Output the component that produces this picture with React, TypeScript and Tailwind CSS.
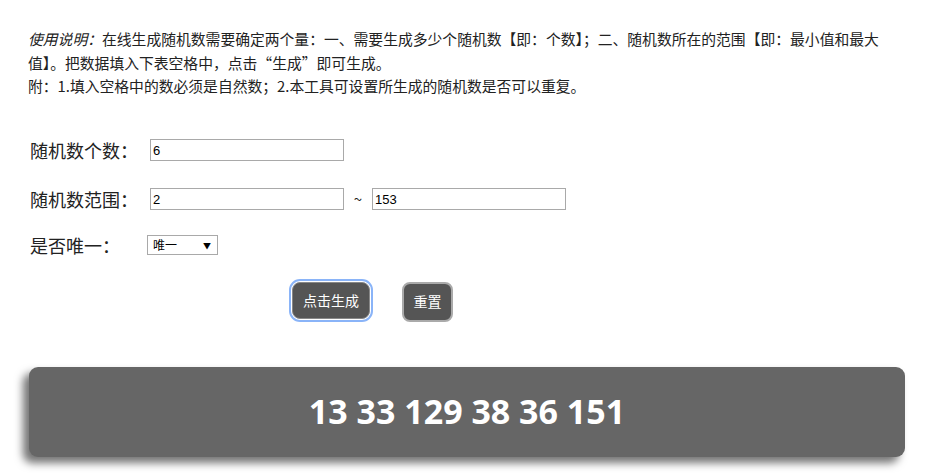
import React from "react";

const cjk = "font-['Noto_Sans_CJK_SC','Liberation_Sans',sans-serif]";

function Field({ value, className = "" }: { value: string; className?: string }) {
    return (
        <input
            readOnly
            value={value}
            className={`h-[22px] w-[194px] border border-[#a9a9a9] bg-white px-[2px] text-[13px] text-black outline-none font-['Liberation_Sans',sans-serif] ${className}`}
        />
    );
}

export default function App() {
    const result = [13, 33, 129, 38, 36, 151];

    return (
        <div className={`w-[928px] h-[475px] overflow-hidden bg-white text-[#333] ${cjk}`}>
            <div className="pl-[28px] pt-[27px] w-[900px] text-[14.8px] leading-[23.5px] text-[#222]">
                <p className="whitespace-nowrap">
                    <i>使用说明：</i>在线生成随机数需要确定两个量：一、需要生成多少个随机数【即：个数】；二、随机数所在的范围【即：最小值和最大
                    <br />
                    值】。把数据填入下表空格中，点击“生成”即可生成。
                </p>
                <p>附：1.填入空格中的数必须是自然数；2.本工具可设置所生成的随机数是否可以重复。</p>
            </div>

            <div className="pl-[30px] pt-[41px] flex flex-col text-[18px] text-[#222]">
                <div className="flex items-center h-[23px]">
                    <span className="w-[120px]">随机数个数：</span>
                    <Field value="6" />
                </div>
                <div className="flex items-center h-[23px] mt-[26px]">
                    <span className="w-[120px]">随机数范围：</span>
                    <Field value="2" />
                    <span className="w-[28px] text-center text-[15px]">~</span>
                    <Field value="153" />
                </div>
                <div className="flex items-center h-[23px] mt-[23px]">
                    <span className="w-[117px]">是否唯一：</span>
                    <div className="relative h-[20px] w-[71px] border border-[#a9a9a9] bg-white flex items-center pl-[5px] text-[12px] text-black">
                        唯一
                        <span className="absolute right-[6px] top-[4px] text-[8px]">▼</span>
                    </div>
                </div>
            </div>

            <div className="flex pl-[292px] pt-[25px] gap-[32px]">
                <button className="h-[37px] w-[78px] rounded-[8px] border border-[#888] bg-[#555] text-[14px] text-white outline-2 outline-[#8ab4f8] outline-offset-[1px]">
                    点击生成
                </button>
                <button className="h-[40px] w-[51px] rounded-[8px] border-2 border-[#aaa] bg-[#555] text-[14px] text-white">
                    重置
                </button>
            </div>

            <div className="ml-[29px] mt-[45px] flex h-[90px] w-[876px] items-center justify-center rounded-[9px] bg-[#666] shadow-[-6px_6px_9px_rgba(0,0,0,0.55)]">
                <span className="font-['Open_Sans',sans-serif] text-[34px] font-bold text-white">{result.join(" ")}</span>
            </div>
        </div>
    );
}
